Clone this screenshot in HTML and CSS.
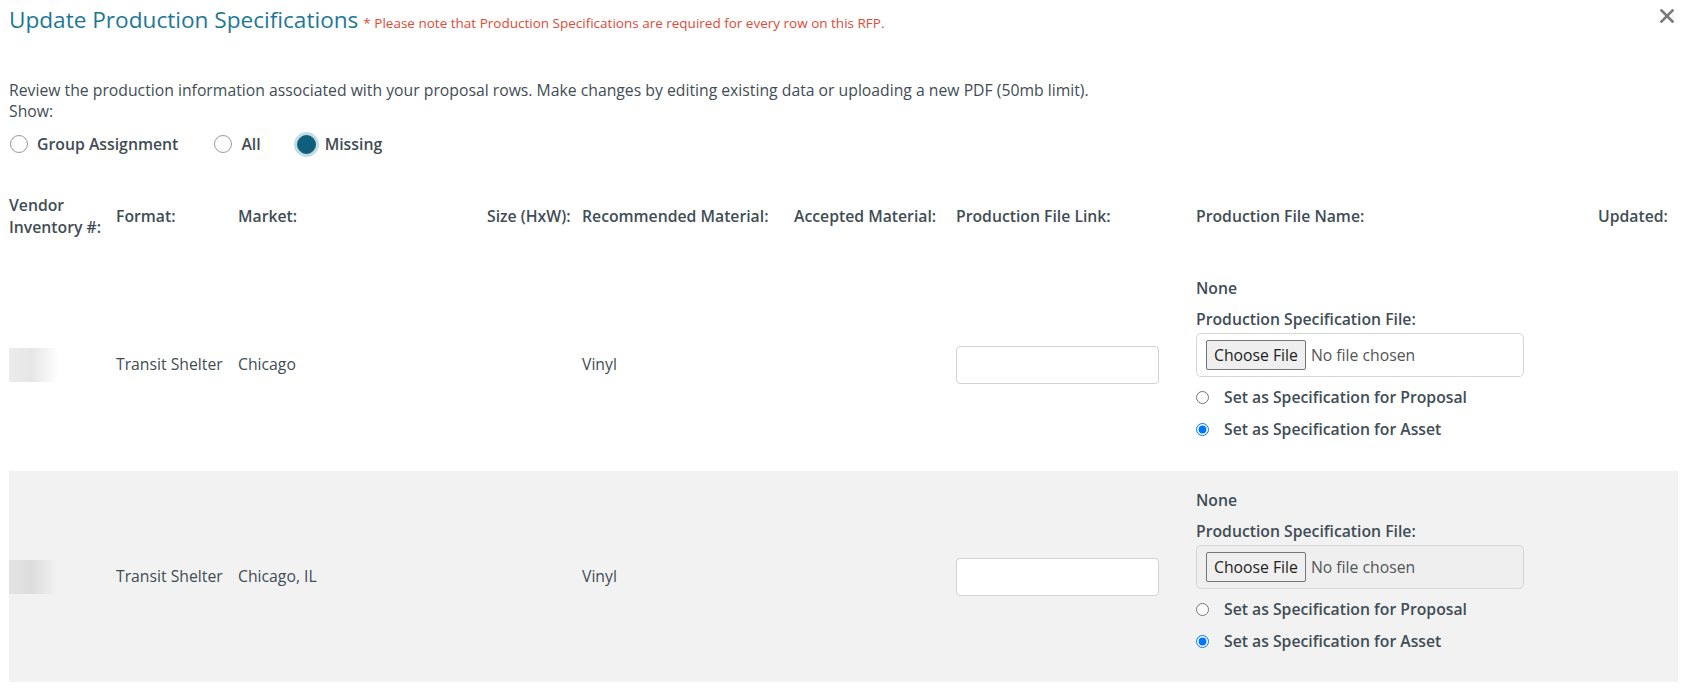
FILE: index.html
```html
<!DOCTYPE html>
<html lang="en">
<head>
<meta charset="utf-8">
<title>Update Production Specifications</title>
<link rel="stylesheet" href="styles.css">
</head>
<body>
<div class="modal">
  <div class="title-bar">
    <div class="title-wrap">
      <h2 class="title">Update Production Specifications</h2>
      <span class="note">* Please note that Production Specifications are required for every row on this RFP.</span>
    </div>
    <button class="close" aria-label="Close">
      <svg width="14" height="14" viewBox="0 0 14 14"><path d="M1.5 1.5 L12.5 12.5 M12.5 1.5 L1.5 12.5" stroke="#7a7a7a" stroke-width="2.6" stroke-linecap="square" fill="none"/></svg>
    </button>
  </div>

  <p class="desc">Review the production information associated with your proposal rows. Make changes by editing existing data or uploading a new PDF (50mb limit).</p>
  <div class="show-label">Show:</div>
  <div class="filters">
    <label class="filter"><input type="radio" name="show" class="big-radio"> Group Assignment</label>
    <label class="filter"><input type="radio" name="show" class="big-radio"> All</label>
    <label class="filter"><input type="radio" name="show" class="big-radio focus" checked> Missing</label>
  </div>

  <div class="grid head">
    <div class="hcell">Vendor<br>Inventory #:</div>
    <div class="hcell">Format:</div>
    <div class="hcell">Market:</div>
    <div class="hcell">Size (HxW):</div>
    <div class="hcell">Recommended Material:</div>
    <div class="hcell">Accepted Material:</div>
    <div class="hcell">Production File Link:</div>
    <div class="hcell">Production File Name:</div>
    <div class="hcell">Updated:</div>
  </div>

  <div class="grid row">
    <div class="cell"><span class="blur"></span></div>
    <div class="cell">Transit Shelter</div>
    <div class="cell">Chicago</div>
    <div class="cell"></div>
    <div class="cell">Vinyl</div>
    <div class="cell"></div>
    <div class="cell"><input type="text" class="link-input"></div>
    <div class="cell file-cell">
      <div class="none">None</div>
      <div class="spec-label">Production Specification File:</div>
      <div class="file-box"><input type="file" class="file-input"></div>
      <label class="spec-radio"><input type="radio" name="r1"> Set as Specification for Proposal</label>
      <label class="spec-radio"><input type="radio" name="r1" checked> Set as Specification for Asset</label>
    </div>
    <div class="cell"></div>
  </div>

  <div class="grid row alt">
    <div class="cell"><span class="blur"></span></div>
    <div class="cell">Transit Shelter</div>
    <div class="cell">Chicago, IL</div>
    <div class="cell"></div>
    <div class="cell">Vinyl</div>
    <div class="cell"></div>
    <div class="cell"><input type="text" class="link-input"></div>
    <div class="cell file-cell">
      <div class="none">None</div>
      <div class="spec-label">Production Specification File:</div>
      <div class="file-box"><input type="file" class="file-input"></div>
      <label class="spec-radio"><input type="radio" name="r2"> Set as Specification for Proposal</label>
      <label class="spec-radio"><input type="radio" name="r2" checked> Set as Specification for Asset</label>
    </div>
    <div class="cell"></div>
  </div>
</div>
</body>
</html>
```

FILE: styles.css
```css
* { box-sizing: border-box; }
html, body { margin: 0; padding: 0; background: #fff; }
body {
  font-family: "Open Sans", "Liberation Sans", sans-serif;
  font-size: 15.75px;
  color: #3f4d56;
  width: 1690px;
  height: 689px;
  overflow: hidden;
}
.modal { padding: 0 12px 0 9px; }

.title-bar {
  display: flex;
  justify-content: space-between;
  align-items: flex-start;
  padding-top: 5px;
}
.title-wrap { display: flex; align-items: baseline; gap: 5px; }
.title {
  margin: 0;
  font-size: 22.6px;
  line-height: 30px;
  font-weight: 400;
  color: #1d7898;
}
.note { font-size: 13.5px; color: #e04a36; }
.close {
  border: 0;
  background: transparent;
  padding: 0;
  margin: 4px 4px 0 0;
  width: 14px;
  height: 14px;
  line-height: 0;
}

.desc { margin: 45px 0 0; line-height: 21px; }
.show-label { line-height: 21px; }

.filters {
  display: flex;
  align-items: center;
  gap: 35px;
  margin-top: 8px;
  height: 28px;
}
.filter {
  display: flex;
  align-items: center;
  gap: 9px;
  font-size: 15.8px;
  font-weight: 600;
  color: #3f4d56;
}
.big-radio {
  appearance: none;
  -webkit-appearance: none;
  width: 18px;
  height: 18px;
  margin: 0 0 0 1px;
  border: 1px solid #9a9a9a;
  border-radius: 50%;
  background: #fff;
}
.big-radio:checked {
  width: 19px;
  height: 19px;
  background: #0f5e7b;
  border-color: #0f5e7b;
}
.big-radio.focus { box-shadow: 0 0 0 3px #c4dde4; }

.grid {
  display: grid;
  grid-template-columns: 107px 122px 249px 95px 212px 162px 240px 402px 1fr;
  width: 1669px;
}
.head { margin-top: 35px; height: 45px; align-items: center; }
.hcell { font-weight: 600; line-height: 22px; white-space: nowrap; }

.row { margin-top: 21px; height: 211px; align-items: center; }
.row + .row { margin-top: 1px; }
.row.alt { background: #f2f2f2; }
.cell { line-height: 21px; }

.blur {
  display: block;
  width: 50px;
  height: 34px;
  background: linear-gradient(to right, #ececec 0%, #e6e6e6 45%, rgba(255,255,255,0) 100%);
}
.alt .blur { background: linear-gradient(to right, #e3e3e3 0%, #dddddd 45%, rgba(242,242,242,0) 100%); }

.link-input {
  width: 203px;
  height: 38px;
  border: 1px solid #cfd4d8;
  border-radius: 4px;
  background: #fff;
  margin: 0;
}

.file-cell { align-self: stretch; padding-top: 18px; }
.none { line-height: 22px; font-weight: 600; color: #3f4d56; }
.spec-label { margin-top: 9px; line-height: 22px; font-weight: 600; }
.file-box {
  margin-top: 3px;
  width: 328px;
  height: 44px;
  border: 1px solid #d3d7da;
  border-radius: 5px;
  padding: 0 9px;
  display: flex;
  align-items: center;
}
.alt .file-box { background: #efefef; }
.file-input {
  font-family: "Open Sans", "Liberation Sans", sans-serif;
  font-size: 15.75px;
  color: #555;
}
.file-input::file-selector-button {
  font-family: "Open Sans", "Liberation Sans", sans-serif;
  font-size: 15.75px;
  color: #222;
  background: #efefef;
  border: 1px solid #767676;
  border-radius: 2px;
  padding: 3px 7px;
  margin-right: 5px;
}
.spec-radio {
  display: flex;
  align-items: center;
  gap: 15px;
  height: 32px;
  font-weight: 600;
  color: #3f4d56;
}
.spec-label + .file-box + .spec-radio { margin-top: 4px; }
.spec-radio input { margin: 0; width: 13px; height: 13px; }
```
